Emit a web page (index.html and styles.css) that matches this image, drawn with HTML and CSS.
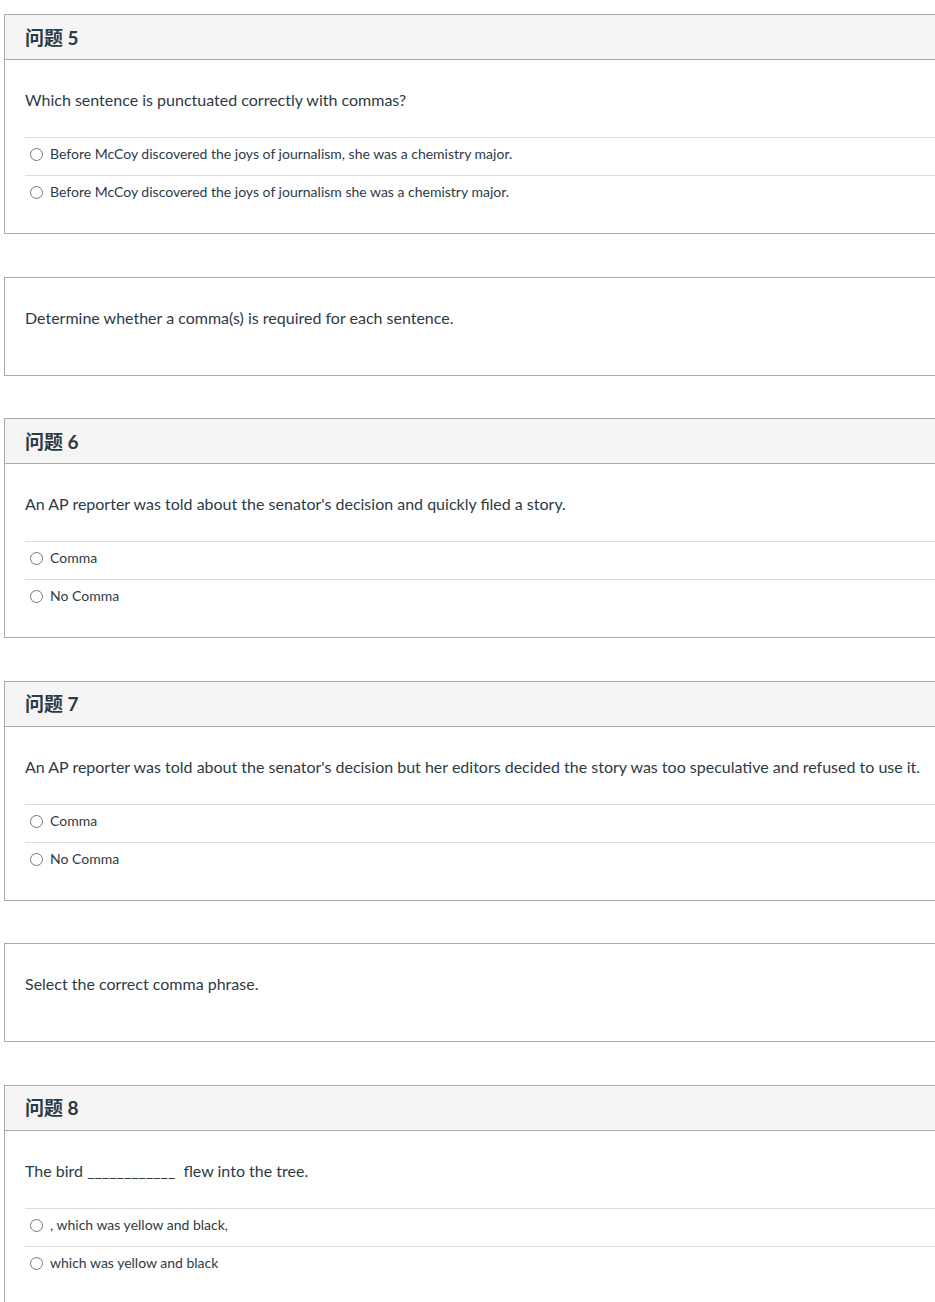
FILE: index.html
```html
<!DOCTYPE html>
<html lang="zh">
<head>
<meta charset="utf-8">
<title>Quiz</title>
<link rel="stylesheet" href="styles.css">
</head>
<body>
<div class="quiz">
  <div class="card">
    <div class="card-header">问题 5</div>
    <div class="card-body">
      <div class="question">Which sentence is punctuated correctly with commas?</div>
      <div class="answers">
        <div class="answer"><span class="radio"></span><span class="label">Before McCoy discovered the joys of journalism, she was a chemistry major.</span></div>
        <div class="answer"><span class="radio"></span><span class="label">Before McCoy discovered the joys of journalism she was a chemistry major.</span></div>
      </div>
    </div>
  </div>

  <div class="card">
    <div class="card-body">
      <div class="question">Determine whether a comma(s) is required for each sentence.</div>
    </div>
  </div>

  <div class="card">
    <div class="card-header">问题 6</div>
    <div class="card-body">
      <div class="question">An AP reporter was told about the senator's decision and quickly filed a story.</div>
      <div class="answers">
        <div class="answer"><span class="radio"></span><span class="label">Comma</span></div>
        <div class="answer"><span class="radio"></span><span class="label">No Comma</span></div>
      </div>
    </div>
  </div>

  <div class="card">
    <div class="card-header">问题 7</div>
    <div class="card-body">
      <div class="question">An AP reporter was told about the senator's decision but her editors decided the story was too speculative and refused to use it.</div>
      <div class="answers">
        <div class="answer"><span class="radio"></span><span class="label">Comma</span></div>
        <div class="answer"><span class="radio"></span><span class="label">No Comma</span></div>
      </div>
    </div>
  </div>

  <div class="card">
    <div class="card-body">
      <div class="question">Select the correct comma phrase.</div>
    </div>
  </div>

  <div class="card">
    <div class="card-header">问题 8</div>
    <div class="card-body">
      <div class="question">The bird <span class="blank">____________</span> flew into the tree.</div>
      <div class="answers">
        <div class="answer"><span class="radio"></span><span class="label">, which was yellow and black,</span></div>
        <div class="answer"><span class="radio"></span><span class="label">which was yellow and black</span></div>
      </div>
    </div>
  </div>
</div>
</body>
</html>
```

FILE: styles.css
```css
html, body {
  margin: 0;
  padding: 0;
  background: #ffffff;
}

body {
  font-family: Lato, "Noto Sans CJK SC", sans-serif;
  color: #2d3b45;
  overflow-x: hidden;
}

.quiz {
  display: flex;
  flex-direction: column;
  gap: 42.6px;
  padding: 14px 0 40px 4px;
}

.card {
  border: 1px solid #aaaaaa;
  border-right: none;
  background: #ffffff;
}

.card-header {
  height: 45px;
  box-sizing: border-box;
  display: flex;
  align-items: center;
  padding: 0 20px 2px 20px;
  background: #f5f5f5;
  border-bottom: 1px solid #aaaaaa;
  font-family: Lato, "Noto Sans CJK SC", sans-serif;
  font-weight: 700;
  font-size: 19px;
  color: #2d3b45;
}

.card-body {
  padding: 30px 0 20px 20px;
}

.question {
  font-size: 16px;
  line-height: 20px;
  height: 20px;
  white-space: nowrap;
  margin-bottom: 27px;
}

.blank {
  margin-right: 4px;
}

.answers {
  display: flex;
  flex-direction: column;
}

.answer {
  display: flex;
  align-items: center;
  height: 37px;
  border-top: 1px solid #dddddd;
  padding-left: 5px;
  font-size: 14px;
}

.answer > * {
  position: relative;
  top: -2.5px;
}

.radio {
  flex: none;
  width: 11px;
  height: 11px;
  border: 1px solid #777777;
  border-radius: 50%;
  margin-right: 7px;
  margin-top: 1px;
}

.label {
  line-height: 18px;
  white-space: nowrap;
}
```
